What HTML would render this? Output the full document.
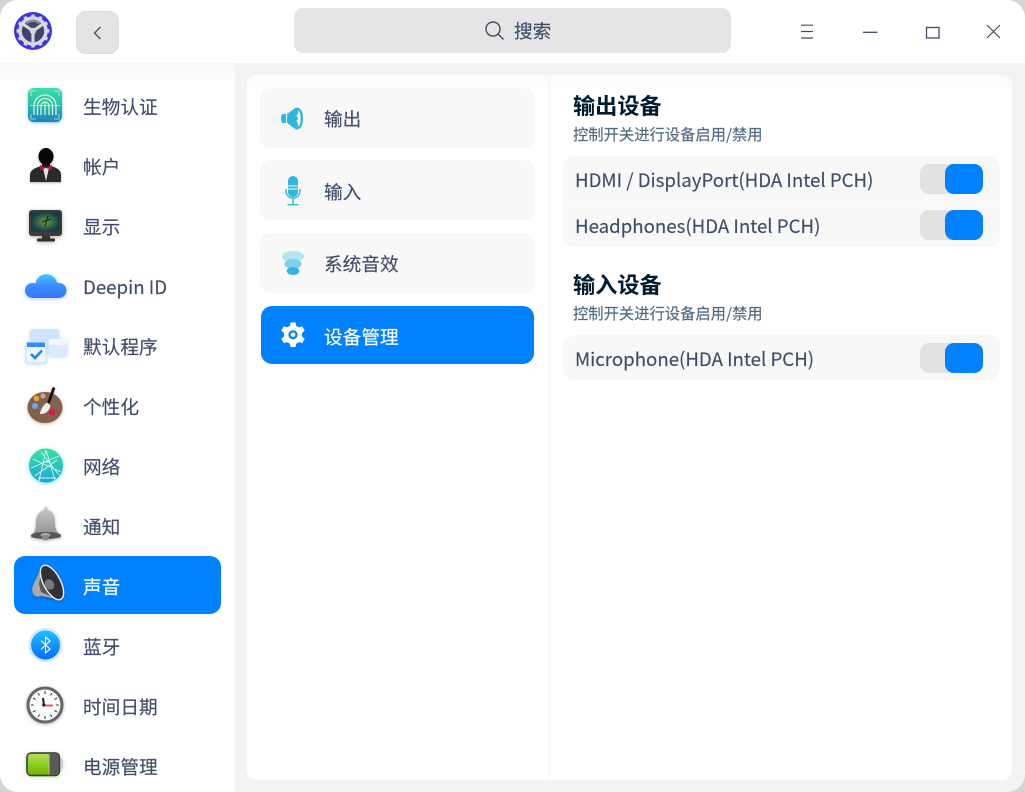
<!DOCTYPE html>
<html lang="zh"><head><meta charset="utf-8"><title>声音</title>
<style>
*{box-sizing:border-box;margin:0;padding:0}
html,body{width:1025px;height:792px;overflow:hidden;background:#d4d4d4}
body{font-family:"Noto Sans CJK SC","Liberation Sans",sans-serif;color:#414d68;font-size:18.67px;-webkit-text-stroke:.15px currentColor}
.a{position:absolute}
#win{position:absolute;left:0;top:0;width:1025px;height:792px;border-radius:18px;background:#f3f3f3;overflow:hidden}
#title{position:absolute;left:0;top:0;width:1025px;height:63px;background:#fff}
#side{position:absolute;left:0;top:63px;width:235px;height:729px;background:linear-gradient(#f8f8f8,#fff 22px)}
.si{position:absolute;left:83px;height:28px;line-height:28px;white-space:nowrap;letter-spacing:0}
#sel{position:absolute;left:14px;top:556px;width:207px;height:58px;border-radius:11px;background:#0081ff}
#panel{position:absolute;left:247px;top:75px;width:765px;height:705px;border-radius:10px;background:linear-gradient(#fbfbfb,#fff 16px)}
#div{position:absolute;left:548px;top:75px;width:2px;height:705px;background:#f8f8f8}
.mi{position:absolute;left:260px;width:275px;height:60px;border-radius:11px;background:#f8f8f8}
.mt{position:absolute;left:324px;height:28px;line-height:28px;white-space:nowrap}
.h{position:absolute;left:573px;height:30px;line-height:30px;font-size:22.2px;font-weight:700;color:#001a2e;-webkit-text-stroke:0}
.sub{position:absolute;left:573px;height:22px;line-height:22px;font-size:15.3px;color:#526a7f;white-space:nowrap}
.box{position:absolute;left:563px;width:437px;background:#f8f8f8;border-radius:11px}
.rt{position:absolute;left:575px;height:28px;line-height:28px;white-space:nowrap}
.tg{position:absolute;left:920px;width:63px;height:30px;border-radius:9px;background:#e2e2e2}
.tg i{position:absolute;left:25px;top:0;width:38px;height:30px;border-radius:9px;background:#0081ff}
svg{position:absolute;overflow:visible}
</style></head><body>
<div id="win">
<div id="title"></div>
<div id="side"></div>

<svg style="left:14px;top:12px" width="38" height="38" viewBox="0 0 38 38">
<circle cx="19" cy="19" r="19" fill="#3a35e0"/>
<circle cx="19" cy="19" r="14.800" fill="#d6d7e2"/>
<g stroke="#d6d7e2" stroke-width="3.400"><path d="M19 2.500V35.500M2.500 19H35.500M10.750 4.700L27.250 33.300M27.250 4.700L10.750 33.300M4.700 10.750L33.300 27.250M33.300 10.750L4.700 27.250"/></g>
<circle cx="19" cy="19" r="11.200" fill="#3f4468"/>
<path d="M19 19V31M19 19L9 12M19 19L29 12" stroke="#d6d7e2" stroke-width="3.200"/>
<path d="M12.500 11.500Q19 6.500 25.500 11.500" stroke="#8f93ad" stroke-width="1.600" fill="none"/>
<circle cx="19" cy="19" r="3.200" fill="#d6d7e2"/>
</svg>

<div class="a" style="left:76px;top:11px;width:43px;height:43px;border-radius:10px;background:#e4e4e4;border:1px solid #dcdcdc"></div>
<svg style="left:92px;top:26px" width="10" height="14" fill="none"><path d="M8.500 1L2.500 7L8.500 13" stroke="#414d68" stroke-width="1.300"/></svg>

<div class="a" style="left:294px;top:8px;width:437px;height:45px;border-radius:9px;background:#e5e5e5"></div>
<svg style="left:484px;top:20px" width="21" height="21" fill="none"><circle cx="9" cy="9" r="7" stroke="#414d68" stroke-width="1.400"/><path d="M14 14L19.500 19.500" stroke="#414d68" stroke-width="1.400"/></svg>
<div class="a" style="left:514px;top:17px;height:28px;line-height:28px">搜索</div>

<svg style="left:800px;top:24px" width="14" height="15"><path d="M1 1.200H13M1 7.500H13M1 14H13" stroke="#414d68" stroke-width="1.200"/></svg>
<svg style="left:863px;top:31px" width="15" height="3"><path d="M0 1.300H14.500" stroke="#414d68" stroke-width="1.300"/></svg>
<svg style="left:925px;top:26px" width="15" height="13" fill="none"><rect x="1.500" y="1.500" width="12.500" height="10.500" stroke="#414d68" stroke-width="1.300"/></svg>
<svg style="left:986px;top:24px" width="15" height="15"><path d="M1 1L14 14M14 1L1 14" stroke="#414d68" stroke-width="1.200"/></svg>

<svg style="left:28px;top:88px;filter:drop-shadow(0 1px 1.500px rgba(30,130,200,.5))" width="34" height="35">
<defs><linearGradient id="fp" x1="0" y1="0" x2="0" y2="1"><stop offset="0" stop-color="#3be2a8"/><stop offset=".5" stop-color="#2fb9ab"/><stop offset="1" stop-color="#1c83c4"/></linearGradient></defs>
<rect width="34" height="34" rx="6" fill="url(#fp)"/>
<g fill="none" stroke="#d9ffd6" stroke-width="1.200"><path d="M6 27V18a11 11 0 0 1 22 0v9"/><path d="M9.500 27V18a7.500 7.500 0 0 1 15 0v9"/><path d="M13 27V18a4 4 0 0 1 8 0v9"/><path d="M17 15V27"/></g>
<path d="M2 17.500H32" stroke="#fff" stroke-width=".7" opacity=".8"/>
<path d="M3 8V3H8M26 3H31V8M3 26V31H8M26 31H31V26" fill="none" stroke="#fff" stroke-width=".8" opacity=".7"/>
</svg>
<div class="si" style="top:93px">生物认证</div>

<svg style="left:30px;top:148px;filter:drop-shadow(0 1px 1px rgba(0,0,0,.3))" width="32" height="35">
<path d="M0 34V27C0 22 5 20 11 18L21 18C27 20 31 22 31 27V34Z" fill="#2a2a2a"/>
<ellipse cx="16" cy="8.500" rx="7.500" ry="8.500" fill="#060606"/>
<path d="M12 16H20V21H12Z" fill="#111"/>
<path d="M13 20L16 33L19 20Z" fill="#e4e4e4"/>
<path d="M10 17L16 19.500L22 17V22L16 20L10 22Z" fill="#b5105c"/>
</svg>
<div class="si" style="top:153px">帐户</div>

<svg style="left:29px;top:210px;filter:drop-shadow(0 1.500px 2px rgba(0,0,0,.3))" width="34" height="32">
<defs><radialGradient id="sc"><stop offset="0" stop-color="#6f9c2e"/><stop offset=".5" stop-color="#3e6a4a"/><stop offset="1" stop-color="#163c44"/></radialGradient></defs>
<rect width="33" height="26" rx="3" fill="#3c3c3c"/>
<rect x="2" y="2" width="29" height="19.500" fill="url(#sc)"/>
<path d="M19 6L16 16M13 12L22 9" stroke="#1c2b22" stroke-width="1.200"/>
<rect x="13" y="26" width="8" height="3" fill="#333"/>
<rect x="8" y="28.500" width="18" height="3" rx="1" fill="#2e2e2e"/>
</svg>
<div class="si" style="top:213px">显示</div>

<svg style="left:25px;top:270px;filter:drop-shadow(0 1px 2px rgba(60,130,255,.4))" width="42" height="30">
<defs><linearGradient id="cl" gradientUnits="userSpaceOnUse" x1="0" y1="1" x2="0" y2="28"><stop offset="0" stop-color="#49d7ff"/><stop offset=".55" stop-color="#3a8cff"/><stop offset="1" stop-color="#3a74ff"/></linearGradient></defs>
<path fill="url(#cl)" d="M7.500 28A7.500 7.500 0 0 1 7.500 13Q9 13 10.500 13.500A11 11 0 0 1 32 12.500Q33 13 34 13A7.500 7.500 0 0 1 34 28Z"/>
</svg>
<div class="si" style="left:83px;top:273px">Deepin ID</div>

<svg style="left:25px;top:328px;filter:drop-shadow(0 1px 1.500px rgba(90,160,240,.4))" width="42" height="36">
<rect x="5" y="1" width="29" height="24" rx="3" fill="#cfe3fb"/>
<rect x="24" y="11" width="18" height="17" rx="2" fill="#dcebfb"/>
<rect x="24" y="11" width="18" height="6" rx="2" fill="#f4f8fd"/>
<rect x="1" y="14" width="20" height="21" rx="2" fill="#edf5fe" stroke="#d0e5fb"/>
<rect x="2" y="14.500" width="18" height="4.500" fill="#2f8df4"/>
<path d="M6 26L10 30L17 22.500" fill="none" stroke="#1d88f2" stroke-width="2.600"/>
</svg>
<div class="si" style="top:333px">默认程序</div>

<svg style="left:28px;top:386px;filter:drop-shadow(0 1px 1.500px rgba(190,90,50,.5))" width="36" height="40">
<ellipse cx="17" cy="21.500" rx="17.500" ry="15.500" fill="#80614d"/>
<circle cx="15" cy="10" r="2.600" fill="#c9a48d"/>
<circle cx="8.500" cy="12.500" r="2.800" fill="#f0a53a"/>
<circle cx="7" cy="20" r="3" fill="#6ea8ec"/>
<circle cx="24" cy="26" r="3.200" fill="#e5134a"/>
<path d="M12 28C12.500 23 15.500 19 19 16.500L22.500 19.500C21.500 25 17 28.500 12 28Z" fill="#f2efe9"/>
<path d="M20.500 17L26 1.500" stroke="#111" stroke-width="2.800"/>
</svg>
<div class="si" style="top:393px">个性化</div>

<svg style="left:29px;top:448px;filter:drop-shadow(0 1px 2px rgba(40,200,240,.6))" width="34" height="35">
<defs><linearGradient id="nw" x1="0" y1="0" x2="0" y2="1"><stop offset="0" stop-color="#3be29a"/><stop offset="1" stop-color="#18a8d8"/></linearGradient></defs>
<circle cx="17" cy="17.500" r="17" fill="url(#nw)"/>
<path d="M17 2L10 33M17 2L26 32M4 11L32 24M2 20L30 8M6 28L28 12M12 4L30 27M9 30L27 30M14 14L21 14" stroke="#fff" stroke-width=".9" opacity=".85" fill="none"/>
</svg>
<div class="si" style="top:453px">网络</div>

<svg style="left:29px;top:507px;filter:drop-shadow(0 1.500px 1.500px rgba(0,0,0,.3))" width="34" height="35">
<defs><linearGradient id="be" x1="0" y1="0" x2="0" y2="1"><stop offset="0" stop-color="#c9c9c9"/><stop offset="1" stop-color="#8c8c8c"/></linearGradient></defs>
<path d="M16 0H18L19 3C25 5 26 10 26 16C26 22 28 26 32 28Q33 31 28 31H6Q1 31 2 28C6 26 7 22 7 16C7 10 9 5 15 3Z" fill="url(#be)"/>
<ellipse cx="17" cy="28.500" rx="15" ry="3.500" fill="#565656"/>
<ellipse cx="16.500" cy="28" rx="5" ry="2" fill="#aaa"/>
<rect x="13" y="28" width="7" height="5" rx="2" fill="#8a8a8a"/>
</svg>
<div class="si" style="top:513px">通知</div>

<div id="sel"></div>
<svg style="left:31px;top:565px;filter:drop-shadow(0 1px 1px rgba(0,0,0,.3))" width="34" height="36">
<path d="M11 2L3 18Q0 24 2 29Q5 33 10 31L26 34Z" fill="#a9a9a9"/>
<path d="M8 19L11 2L26 34L10 27Z" fill="#55575b"/>
<ellipse cx="21" cy="17.500" rx="19" ry="8.500" transform="rotate(62 21 17.500)" fill="#303135" stroke="#e6e6e6" stroke-width="1.500"/>
<ellipse cx="18.500" cy="19.500" rx="5.500" ry="4.500" transform="rotate(62 18.500 19.500)" fill="#77797c"/>
</svg>
<div class="si" style="top:573px;color:#fff">声音</div>

<svg style="left:29px;top:627px" width="34" height="38">
<circle cx="16.500" cy="18" r="17" fill="#0a8cff" opacity=".2"/>
<defs><linearGradient id="bt" x1="0" y1="0" x2="0" y2="1"><stop offset="0" stop-color="#1cc0ff"/><stop offset="1" stop-color="#0a6cff"/></linearGradient></defs>
<circle cx="16.500" cy="18" r="14.500" fill="url(#bt)"/>
<path d="M12 13.500L21 22L16.500 26V10L21 14L12 22.500" fill="none" stroke="#fff" stroke-width="1.100"/>
</svg>
<div class="si" style="top:633px">蓝牙</div>

<svg style="left:26px;top:686px;filter:drop-shadow(0 1px 1.500px rgba(0,0,0,.3))" width="38" height="38">
<circle cx="19" cy="19" r="17" fill="#fbfbfb" stroke="#666" stroke-width="3"/>
<g stroke="#444" stroke-width="1.100"><path d="M19 5V8M19 30V33M5 19H8M30 19H33M12 7L13.500 9.500M26 7L24.500 9.500M12 31L13.500 28.500M26 31L24.500 28.500M7 12L9.500 13.500M7 26L9.500 24.500M31 12L28.500 13.500M31 26L28.500 24.500"/></g>
<path d="M17 12L18 19.500" stroke="#222" stroke-width="2"/>
<path d="M18 19.500H27" stroke="#f04a50" stroke-width="1.800"/>
<circle cx="17.800" cy="19" r="1.600" fill="#222"/>
</svg>
<div class="si" style="top:693px">时间日期</div>

<svg style="left:26px;top:752px;filter:drop-shadow(0 1px 2px rgba(140,200,40,.5))" width="38" height="25">
<defs><linearGradient id="bat" x1="0" y1="0" x2="0" y2="1"><stop offset="0" stop-color="#b2de5a"/><stop offset=".55" stop-color="#8ccb1c"/><stop offset="1" stop-color="#70b800"/></linearGradient></defs>
<rect x="33" y="7" width="4" height="10" rx="2" fill="#d0d0d0"/>
<rect x=".7" y=".7" width="33" height="23" rx="4.500" fill="#5a5a5a" stroke="#333" stroke-width="1"/>
<path d="M2 5Q2 2 5 2H23V22.500H5Q2 22.500 2 19.500Z" fill="url(#bat)"/>
<path d="M23 2V22.500" stroke="#a7c58b" stroke-width="1"/>
</svg>
<div class="si" style="top:753px">电源管理</div>

<div id="panel"></div>
<div id="div"></div>

<div class="mi" style="top:88px"></div>
<svg style="left:281px;top:106px" width="24" height="24">
<path d="M2 8H5V17H2Q0 17 0 12.500Q0 8 2 8Z" fill="#2eb7de"/>
<path d="M6 8L15 1.500C20 1.500 22 6 22 12.500C22 19 20 23.500 15 23.500L6 17Z" fill="#2eb7de"/>
<path d="M17 4C19 6 19.700 9 19.700 12.500C19.700 16 19 19 17 21C17.500 19 17 16 15 15A3 3 0 0 0 15 9.500C17 9 17.500 6 17 4Z" fill="#f8f8f8"/>
</svg>
<div class="mt" style="top:105px">输出</div>

<div class="mi" style="top:160px"></div>
<svg style="left:285px;top:176px" width="16" height="30">
<rect x="3" y="0" width="10" height="21" rx="5" fill="#2eb7de"/>
<path d="M3 10H13M3 13H13" stroke="#f8f8f8" stroke-width="1"/>
<path d="M1 13V15A7 7 0 0 0 15 15V13M8 22V28M2.500 28.700H13.500" fill="none" stroke="#2eb7de" stroke-width="1.400"/>
</svg>
<div class="mt" style="top:178px">输入</div>

<div class="mi" style="top:233px"></div>
<svg style="left:281px;top:251px" width="24" height="25">
<ellipse cx="12" cy="5.500" rx="11" ry="5.500" fill="#b4e3f0"/>
<ellipse cx="12" cy="13" rx="8.500" ry="5" fill="#7fcfe8"/>
<ellipse cx="12" cy="20" rx="6.200" ry="4" fill="#2eb7de"/>
</svg>
<div class="mt" style="top:250px">系统音效</div>

<div class="a" style="left:261px;top:306px;width:273px;height:58px;border-radius:11px;background:#0081ff"></div>
<svg style="left:280px;top:322px" width="26" height="26" viewBox="0 0 26 26">
<path fill="#fff" fill-rule="evenodd" d="M10.500 0.500H15.500L16.300 4Q17.700 4.500 18.800 5.400L22.200 4.200L24.700 8.600L22 11Q22.200 12.800 22 14.400L24.700 16.900L22.200 21.200L18.800 20.100Q17.700 21 16.300 21.500L15.500 25H10.500L9.700 21.500Q8.300 21 7.200 20.100L3.800 21.200L1.300 16.900L4 14.400Q3.800 12.800 4 11L1.300 8.600L3.800 4.200L7.200 5.400Q8.300 4.500 9.700 4ZM13 8.200A4.600 4.600 0 1 0 13 17.400A4.600 4.600 0 1 0 13 8.200ZM13 10.500A2.300 2.300 0 1 1 13 15.100A2.300 2.300 0 1 1 13 10.500Z"/>
</svg>
<div class="mt" style="top:323px;color:#fff">设备管理</div>

<div class="h" style="top:90px">输出设备</div>
<div class="sub" style="top:123px">控制开关进行设备启用/禁用</div>
<div class="box" style="top:156px;height:91px"></div>
<div class="a" style="left:563px;top:201px;width:437px;height:1px;background:#fdfdfd"></div>
<div class="rt" style="top:166px">HDMI / DisplayPort(HDA Intel PCH)</div>
<div class="tg" style="top:164px"><i></i></div>
<div class="rt" style="top:212px">Headphones(HDA Intel PCH)</div>
<div class="tg" style="top:210px"><i></i></div>

<div class="h" style="top:269px">输入设备</div>
<div class="sub" style="top:302px">控制开关进行设备启用/禁用</div>
<div class="box" style="top:335px;height:45px"></div>
<div class="rt" style="top:345px">Microphone(HDA Intel PCH)</div>
<div class="tg" style="top:343px"><i></i></div>
</div>
</body></html>
